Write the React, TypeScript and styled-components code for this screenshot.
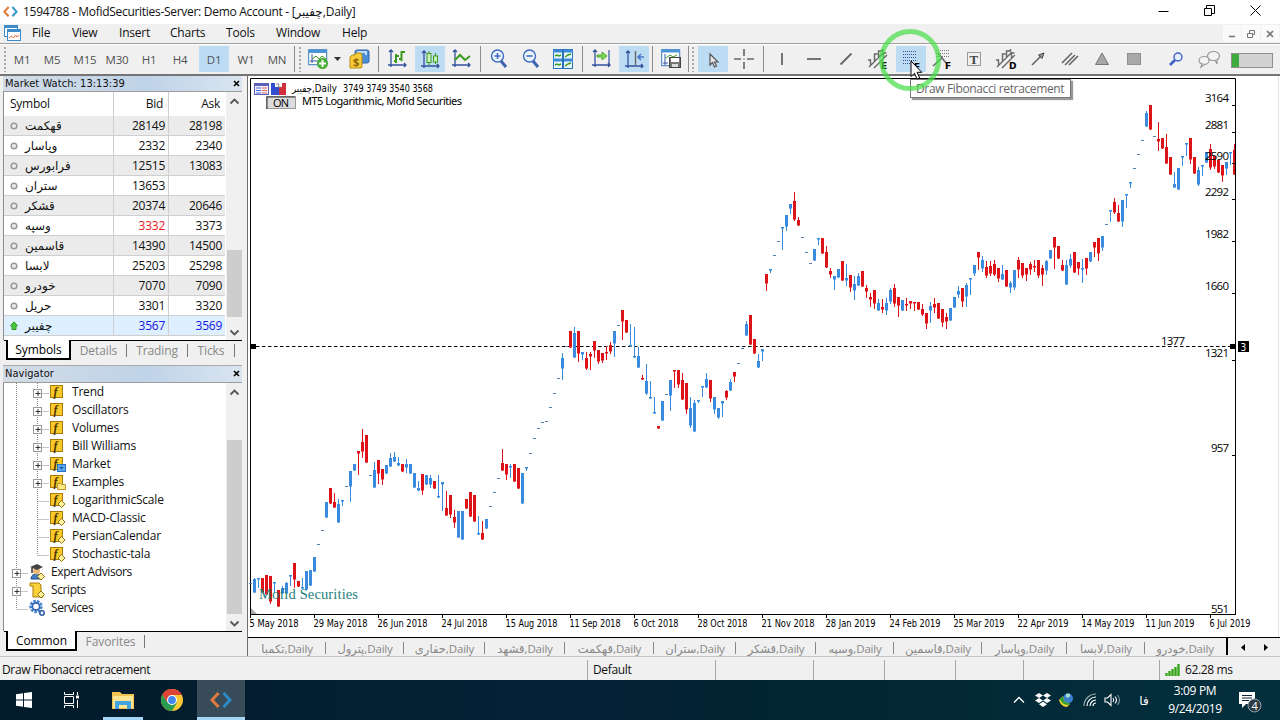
import { Fragment, ReactNode } from 'react';
import styled, { createGlobalStyle } from 'styled-components';

const GlobalStyle = createGlobalStyle`
	* {
		box-sizing: border-box;
	}
	body {
		margin: 0;
		overflow: hidden;
		background: #f0f0f0;
		font-family: 'Open Sans', 'Noto Sans', 'DejaVu Sans', sans-serif;
		font-size: 12px;
		color: #111;
	}
	svg {
		display: block;
		flex: none;
	}
`;

const Window = styled.div`
	position: relative;
	width: 1280px;
	height: 720px;
	display: flex;
	flex-direction: column;
	overflow: hidden;
	white-space: nowrap;
`;

/* ---------- title + menu ---------- */

const TitleBar = styled.div`
	height: 24px;
	display: flex;
	align-items: center;
	padding-left: 3px;
	background: #fff;

	.title {
		margin-left: 5px;
		padding-bottom: 2px;
		letter-spacing: -0.29px;
		flex: 1;
	}
	.buttons {
		display: flex;
		align-items: center;
		gap: 35px;
		padding: 0 19px 4px 0;
	}
`;

const MenuBar = styled.div`
	height: 20px;
	display: flex;
	align-items: center;
	padding-left: 4px;
	background: #f0f0f0;
	border-bottom: 1px solid #a0a0a0;
`;

const MenuItem = styled.span<{ $w: number }>`
	width: ${props => props.$w}px;
	padding-bottom: 2px;
	letter-spacing: -0.2px;
`;

const ChildButtons = styled.div`
	display: flex;
	margin-left: auto;
	gap: 1px;
	padding-right: 1px;

	span {
		width: 18px;
		height: 17px;
		display: flex;
		align-items: center;
		justify-content: center;
		background: #fafafa;
	}
`;

/* ---------- toolbar ---------- */

const ToolBar = styled.div`
	height: 32px;
	display: flex;
	align-items: center;
	padding: 0 0 1px 3px;
	background: #f0f0f0;
	border-top: 1px solid #fff;
	border-bottom: 2px solid #757575;
`;

const Grip = styled.i<{ $ml?: number }>`
	width: 4px;
	height: 26px;
	margin-left: ${props => props.$ml ?? 0}px;
	background: radial-gradient(circle at 2px 2px, #a9a9a9 1px, transparent 1.4px) 0
		0 / 5px 4px;
`;

const Sep = styled.i<{ $ml?: number }>`
	width: 1px;
	height: 26px;
	margin-left: ${props => props.$ml ?? 0}px;
	background: #8c8c8c;
`;

const Slot = styled.span<{ $w?: number; $ml?: number; $on?: boolean }>`
	width: ${props => props.$w ?? 32}px;
	height: 26px;
	margin-left: ${props => props.$ml ?? 0}px;
	display: flex;
	align-items: center;
	justify-content: center;
	border-left: ${props => (props.$on ? '2px solid #f0f0f0' : 'none')};
	background: ${props => (props.$on ? '#bcdcf4' : 'transparent')};
	padding-top: ${props => (props.$on ? 1 : 0)}px;
	color: #505050;
	font-size: 11.5px;
	letter-spacing: -0.2px;
`;

const Progress = styled.div`
	width: 42px;
	height: 15px;
	margin: 2px 0 0 6px;
	border: 1px solid #8f8f8f;
	background: linear-gradient(90deg, #3fab3f 7px, #d2d2d2 7px);
`;

/* ---------- side panels ---------- */

const Main = styled.div`
	height: 580px;
	display: flex;
`;

const Side = styled.div`
	width: 247px;
	display: flex;
	flex-direction: column;
	border-left: 3px solid #f0f0f0;
	border-right: 5px solid #f0f0f0;
`;

const PanelHead = styled.div`
	height: 16px;
	display: flex;
	align-items: center;
	justify-content: space-between;
	padding: 0 2px 1px 2px;
	background: linear-gradient(90deg, #d3dce6, #bfd3e8 60%, #d9e4f0);
	border-bottom: 1px solid #9c9c9c;
	font-family: 'DejaVu Sans Condensed', 'DejaVu Sans', sans-serif;
	font-stretch: condensed;
	font-size: 11px;
	letter-spacing: 0.05px;
`;

const PanelBody = styled.div<{ $h: number }>`
	height: ${props => props.$h}px;
	display: flex;
	background: #fff;
	border-left: 1px solid #8c8c8c;
`;

const Table = styled.div`
	width: 221px;
`;

const Row = styled.div<{ $bg: string; $head?: boolean }>`
	height: ${props => (props.$head ? 24 : 20)}px;
	display: grid;
	grid-template-columns: 110px 55px 56px;
	background: ${props => props.$bg};
	border-bottom: ${props => (props.$head ? 0 : 1)}px solid #cfcfcf;
	line-height: ${props => (props.$head ? 24 : 19)}px;
	letter-spacing: -0.25px;
`;

const Cell = styled.span<{ $right?: boolean; $color?: string }>`
	display: flex;
	align-items: center;
	justify-content: ${props => (props.$right ? 'flex-end' : 'flex-start')};
	padding: ${props => (props.$right ? '0 3px 0 0' : '0 0 0 6px')};
	border-right: 1px solid #cfcfcf;
	color: ${props => props.$color ?? '#111'};

	&:last-child {
		border-right: none;
	}
	.name {
		margin-left: 7px;
		letter-spacing: 0;
	}
`;

const Scroll = styled.div<{ $gap: number; $thumb: number }>`
	width: 16px;
	margin-left: auto;
	display: flex;
	flex-direction: column;
	align-items: center;
	background: #f0f0f0;
	padding: 5px 0 3px;

	i {
		width: 15px;
		height: ${props => props.$thumb}px;
		margin-top: ${props => props.$gap}px;
		background: #cdcdcd;
	}
	svg:last-child {
		margin-top: auto;
	}
`;

const Tabs = styled.div`
	height: 20px;
	display: flex;
	border-top: 1px solid #000;
	margin-left: 1px;
	padding-left: 2px;
	color: #888;
	letter-spacing: -0.1px;
	line-height: 19px;
`;

const Tab = styled.span<{ $w: number; $active?: boolean }>`
	width: ${props => props.$w}px;
	height: 20px;
	margin-top: -1px;
	display: flex;
	align-items: center;
	justify-content: center;
	color: ${props => (props.$active ? '#000' : '#888')};
	background: ${props => (props.$active ? '#fff' : 'transparent')};
	border: ${props => (props.$active ? '1px solid #000' : 'none')};
	border-width: ${props => (props.$active ? '0 2px 2px 2px' : '0')};
`;

const TabSep = styled.i`
	width: 1px;
	height: 13px;
	margin-top: 3px;
	background: #777;
`;

const Tree = styled.div`
	width: 221px;
`;

const TreeRow = styled.div<{ $root?: boolean }>`
	height: 18px;
	display: flex;
	align-items: center;
	letter-spacing: ${props => (props.$root ? -0.4 : -0.2)}px;

	span {
		margin-left: 5px;
		padding-bottom: 1px;
	}
`;

/* ---------- chart ---------- */

const ChartArea = styled.div`
	flex: 1;
	display: flex;
	flex-direction: column;
	border-left: 1px solid #6f6f6f;
	background: #fff;
`;

const ChartTabs = styled.div`
	height: 19px;
	display: flex;
	border-top: 1px solid #000;
	background: #f0f0f0;
	color: #888;

	.arrows {
		display: flex;
		align-items: center;
		gap: 19px;
		margin-left: 13px;
	}
`;

const ChartTab = styled.span<{ $w: number; $last?: boolean }>`
	width: ${props => props.$w}px;
	display: flex;
	align-items: center;
	justify-content: center;
	padding: 2px ${props => (props.$last ? 3 : 0)}px 0 0;
	font-size: 11.5px;
	letter-spacing: -0.2px;
	background: ${props =>
		props.$last
			? 'linear-gradient(#000, #000) right 0 / 2px 17px no-repeat'
			: 'linear-gradient(#888, #888) right 4px / 1px 12px no-repeat'};
`;

/* ---------- status + taskbar ---------- */

const StatusBar = styled.div`
	height: 24px;
	display: flex;
	align-items: flex-end;
	background: #f0f0f0;
	border-top: 1px solid #c4c4c4;
	letter-spacing: -0.36px;
`;

const StatusCell = styled.span<{ $w: number; $first?: boolean }>`
	width: ${props => props.$w}px;
	height: 20px;
	display: flex;
	align-items: center;
	gap: 5px;
	padding-left: ${props => (props.$first ? 2 : 5)}px;
	padding-bottom: 1px;
	border-left: ${props => (props.$first ? 0 : 1)}px solid #a8a8a8;
`;

const TaskBar = styled.div`
	height: 40px;
	display: flex;
	align-items: center;
	background: linear-gradient(90deg, #021c2c, #062036 45%, #022532 60%, #042f3d);
	color: #fff;
`;

const Task = styled.span<{ $w: number; $active?: boolean; $open?: boolean }>`
	width: ${props => props.$w}px;
	height: 40px;
	display: flex;
	align-items: center;
	justify-content: center;
	background: ${props => (props.$active ? '#384b59' : 'transparent')};
	box-shadow: ${props =>
		props.$active || props.$open ? 'inset 0 -3px 0 #a5d5f5' : 'none'};
`;

const Tray = styled.div`
	display: flex;
	align-items: center;
	margin-left: auto;
	height: 40px;

	.lang {
		width: 26px;
		margin-left: 9px;
		text-align: center;
	}
	.clock {
		width: 76px;
		text-align: center;
		line-height: 18px;
		letter-spacing: -0.35px;
	}
	.notice {
		width: 47px;
		padding: 4px 0 0 6px;
	}
`;

/* ---------- overlays ---------- */

const Tooltip = styled.div`
	position: absolute;
	left: 910px;
	top: 79px;
	width: 161px;
	height: 19px;
	display: flex;
	align-items: center;
	padding: 0 0 1px 5px;
	border: 1px solid #777;
	background: #fff;
	color: #666;
	letter-spacing: -0.36px;
	box-shadow: 2px 2px 1px #999;
`;

const Pointer = styled.svg`
	position: absolute;
	left: 878px;
	top: 28px;
`;

/* ---------- icons ---------- */

const NAVY = '#34529c';
const GREEN = '#3c9a1e';
const GREY = '#666';

const axes = (
	<path
		d="M4 1v17M1 16h18M2 3l2-2 2 2M17 14l2 2-2 2"
		stroke={NAVY}
		strokeWidth="1.3"
		fill="none"
	/>
);

const channel = (
	<path
		d="M1 18L16 3M6 19L19 6M2.500 16v-5H0M6.500 12V5h3M10.500 9V2h4V0M15.500 10V4h3"
		stroke={GREY}
		strokeWidth="1.4"
		fill="none"
	/>
);

const dots = (x: number, y: number, w: number, rows: number, color: string) =>
	Array.from({ length: rows }, (_, i) => (
		<path
			key={i}
			d={`M${x} ${y + i * 3}h${w}`}
			stroke={color}
			strokeWidth="1"
			strokeDasharray="1 1"
		/>
	));

const letter = (ch: string) => (
	<text
		x="13"
		y="19.500"
		fontSize="9"
		fontWeight="900"
		fontFamily="DejaVu Sans, sans-serif"
		fill="#000"
	>
		{ch}
	</text>
);

const icons: Record<string, ReactNode> = {
	newChart: (
		<>
			<rect x="0.7" y="0.7" width="18" height="15" fill="#fff" stroke="#3a7cc0" />
			<path d="M1 2.5h18" stroke="#4a94d8" strokeWidth="3" />
			<path d="M4 5v9M2 12h14" stroke={NAVY} />
			<path d="M4 10l4-3 3 3 3-3 4 3" stroke={GREEN} fill="none" />
			<circle cx="14.5" cy="14.5" r="5.5" fill="#46ad35" />
			<path d="M11 14.5h7M14.5 11v7" stroke="#fff" strokeWidth="2" />
		</>
	),
	profiles: (
		<>
			<rect x="6" y="1" width="14" height="13" rx="2" fill="#4a8fd6" stroke="#2f62aa" />
			<path d="M8 3h9v3" stroke="#bcdcf8" strokeWidth="2" fill="none" />
			<path
				d="M1 8l2-2h3l1-2h5l1 2v12l-1 1H1z"
				fill="#f6cc3a"
				stroke="#b88a12"
			/>
			<text x="4" y="17" fontSize="11" fontWeight="700" fill="#8a6205">
				$
			</text>
		</>
	),
	bars: (
		<>
			{axes}
			<path
				d="M9 5v9M7 12h2M9 7h3M14.500 2v10M12 10h2M14 3h4"
				stroke={GREEN}
				strokeWidth="2"
				fill="none"
			/>
		</>
	),
	candles: (
		<>
			{axes}
			<path d="M9 1v14M15.500 3v11" stroke={GREEN} />
			<rect x="7" y="3.5" width="4" height="9" fill="#c9f0b8" stroke={GREEN} />
			<rect x="13.500" y="6" width="4" height="6" fill="#c9f0b8" stroke={GREEN} />
		</>
	),
	line: (
		<>
			{axes}
			<path d="M4 11l5-5 5 5 5-4" stroke={GREEN} strokeWidth="2" fill="none" />
		</>
	),
	zoomIn: (
		<>
			<path d="M12 12l5 6" stroke="#3d63b0" strokeWidth="3" />
			<circle cx="8.500" cy="7" r="6" fill="#eaf4ff" stroke="#3f6cc4" strokeWidth="1.4" />
			<path d="M5.500 7h6M8.500 4v6" stroke="#3f6cc4" strokeWidth="1.6" />
		</>
	),
	zoomOut: (
		<>
			<path d="M12 12l5 6" stroke="#3d63b0" strokeWidth="3" />
			<circle cx="8.500" cy="7" r="6" fill="#eaf4ff" stroke="#3f6cc4" strokeWidth="1.4" />
			<path d="M5.500 7h6" stroke="#3f6cc4" strokeWidth="1.6" />
		</>
	),
	tile: (
		<>
			<rect x="0.500" y="0.500" width="19" height="19" fill="#e8f6ff" stroke="#2b72b8" />
			<path d="M0 2h20M0 11h20" stroke="#3b8ad8" strokeWidth="3" />
			<path d="M10 0v20" stroke="#2b72b8" strokeWidth="2" />
			<path
				d="M2 7l2-1 2 1 2-1M12 8l3-2 3-1M2 16l2-1 2 1 2-1M12 17l3-2 3-1"
				stroke={GREEN}
				strokeWidth="1.4"
				fill="none"
			/>
		</>
	),
	autoScroll: (
		<>
			{axes}
			<path d="M18 1v14" stroke={NAVY} strokeWidth="1.2" />
			<path d="M6 6h5V3l5 4-5 4V8H6z" fill="#7ed957" stroke={GREEN} strokeWidth="0.800" />
		</>
	),
	shift: (
		<>
			{axes}
			<path d="M11.500 1v14" stroke={GREY} strokeWidth="1.4" />
			<path d="M20 7h-5M17 4l-3 3 3 3" stroke="#4a78cc" strokeWidth="1.600" fill="none" />
		</>
	),
	template: (
		<>
			<rect x="0.700" y="0.700" width="18" height="16" fill="#fff" stroke="#3a7cc0" />
			<path d="M1 2h18" stroke="#4a94d8" strokeWidth="3" />
			<path d="M4 5v11M2 14h5" stroke={NAVY} />
			<path d="M5 9l4-3 3 2 4-2" stroke={GREEN} fill="none" />
			<rect x="8.500" y="8.500" width="11" height="10" fill="#777" stroke="#444" />
			<rect x="10" y="9" width="8" height="4" fill="#fff" />
			<rect x="11" y="15" width="6" height="3" fill="#ddd" />
		</>
	),
	cursor: (
		<path
			d="M7 4v11l2.500-2.500 2 4.500 2-1-2-4H15z"
			fill="#e8e8e8"
			stroke="#555"
			strokeWidth="1.2"
		/>
	),
	cross: (
		<path
			d="M10 0v7M10 13v7M0 10h7M13 10h7M9.500 10h1"
			stroke={GREY}
			strokeWidth="1.6"
		/>
	),
	vline: <path d="M10 4v12" stroke={GREY} strokeWidth="1.8" />,
	hline: <path d="M3 10h14" stroke={GREY} strokeWidth="1.8" />,
	trend: <path d="M4.500 15.500l11-11" stroke={GREY} strokeWidth="1.8" />,
	channelE: (
		<>
			{channel}
			{letter('E')}
		</>
	),
	fib: (
		<>
			{dots(2, 1.5, 14, 5, '#3a4f94')}
			{letter('F')}
		</>
	),
	fibE: (
		<>
			{dots(4, 1.5, 13, 3, '#777')}
			<path d="M1 17l9-8M6 4l8 10" stroke={GREY} strokeWidth="1.5" />
			{letter('F')}
		</>
	),
	text: (
		<>
			<rect
				x="3.500"
				y="3.500"
				width="13"
				height="13"
				fill="none"
				stroke="#444"
				strokeDasharray="1 1"
			/>
			<text
				x="5.500"
				y="14.500"
				fontSize="13"
				fontWeight="700"
				fontFamily="Liberation Serif, serif"
				fill="#444"
			>
				T
			</text>
		</>
	),
	andrews: (
		<>
			{channel}
			{letter('D')}
		</>
	),
	arrow: (
		<>
			<path d="M4 16l9-9" stroke={GREY} strokeWidth="1.600" />
			<path d="M10.500 6l5.500-2-2 5.500z" fill="#999" stroke="#444" />
		</>
	),
	lines: (
		<path
			d="M2 14L12 4M5 16L15 6M9 16l9-9"
			stroke={GREY}
			strokeWidth="1.6"
			fill="none"
		/>
	),
	triangle: <path d="M10 4l6.500 11.500h-13z" fill="#a6a6a6" stroke="#777" />,
	rect: <rect x="3.500" y="4.500" width="13" height="11" fill="#a8a8a8" stroke="#909090" />,
	search: (
		<>
			<path d="M9 11l-5 5" stroke="#4161c4" strokeWidth="2.600" />
			<circle cx="12" cy="8" r="4" fill="#e4ecff" stroke="#4161c4" strokeWidth="1.4" />
		</>
	),
	chat: (
		<g fill="#f3f3f3" stroke="#999" strokeWidth="1.2">
			<ellipse cx="14.500" cy="7" rx="6" ry="4.500" />
			<path d="M16 11l2 4v-5" />
			<ellipse cx="5" cy="11.500" rx="5" ry="4" />
			<path d="M3 15l-1 3 4-3" />
		</g>
	),
};

const Icon = ({ name }: { name: string }) => (
	<svg width="20" height="20" viewBox="0 0 20 20" overflow="visible">
		{icons[name]}
	</svg>
);

const Chevron = ({ up }: { up?: boolean }) => (
	<svg width="11" height="9" viewBox="0 0 11 9">
		<path
			d={up ? 'M1.500 6.500l4-4 4 4' : 'M1.500 2.500l4 4 4-4'}
			fill="none"
			stroke="#555"
			strokeWidth="1.8"
		/>
	</svg>
);

const CloseMark = () => (
	<svg width="7" height="7" viewBox="0 0 7 7">
		<path d="M1 1l5 5M6 1L1 6" stroke="#000" strokeWidth="1.6" />
	</svg>
);

const BracketLogo = ({ size }: { size: number }) => (
	<svg width={size} height={size * 0.75} viewBox="0 0 16 12">
		<path d="M6 1L1.500 6 6 11" fill="none" stroke="#e07a3c" strokeWidth="2.2" />
		<path d="M10 1l4.500 5-4.500 5" fill="none" stroke="#3c9ad0" strokeWidth="2.2" />
	</svg>
);

const FnBadge = ({ badge }: { badge?: string }) => (
	<svg width="17" height="18" viewBox="0 0 17 18">
		<rect x="0.500" y="2.500" width="12" height="12" fill="#f8c92c" stroke="#a87a08" />
		<text
			x="3.500"
			y="12.500"
			fontSize="12"
			fontStyle="italic"
			fontWeight="700"
			fontFamily="Liberation Serif, serif"
			fill="#4a3600"
		>
			f
		</text>
		{badge === 'market' && (
			<>
				<rect x="7.500" y="9.500" width="8" height="7" fill="#5aa6f0" stroke="#2d6fc0" />
				<path d="M9.500 12l2 2.500 2-2.500z" fill="#134a90" />
			</>
		)}
		{badge === 'folder' && (
			<path d="M7.500 10.500h3l1 1h4v5h-8z" fill="#fbe680" stroke="#b8962c" />
		)}
		{badge === 'diamond' && (
			<path d="M11.500 9.500l3.500 3.500-3.500 3.500-3.500-3.500z" fill="#fdf2a0" stroke="#9a7408" />
		)}
	</svg>
);

const RootIcon = ({ kind }: { kind: string }) => (
	<svg width="17" height="18" viewBox="0 0 17 18">
		{kind === 'advisor' && (
			<>
				<path d="M2 16c0-4 3-5 5-5s5 1 5 5z" fill="#3f7cc4" stroke="#1f4c8a" />
				<circle cx="7.500" cy="8" r="3.500" fill="#e8b878" />
				<path d="M1 4l7-3 6 3-6 3z" fill="#444" />
				<path d="M3 5v5" stroke="#333" strokeWidth="1.5" />
			</>
		)}
		{kind === 'script' && (
			<path
				d="M1 2h9l2 2v8h2v4H4V5H1z"
				fill="#f9d23c"
				stroke="#a87a08"
			/>
		)}
		{kind === 'service' ? (
			<>
				<circle
					cx="7"
					cy="7.500"
					r="5"
					fill="none"
					stroke="#4a84cc"
					strokeWidth="3.4"
					strokeDasharray="2.4 1"
				/>
				<circle cx="7" cy="7.500" r="3.600" fill="#fff" stroke="#2f62b0" strokeWidth="1.600" />
				<circle cx="13" cy="14" r="2.200" fill="#fff" stroke="#2f62b0" strokeWidth="1.600" />
			</>
		) : (
			<path d="M12 10l3.500 3.500L12 17l-3.500-3.500z" fill="#fdf2a0" stroke="#9a7408" />
		)}
	</svg>
);

/* ---------- data ---------- */

const menus: [string, number][] = [
	['File', 40],
	['View', 47],
	['Insert', 51],
	['Charts', 56],
	['Tools', 50],
	['Window', 66],
	['Help', 40],
];

const timeframes: [string, number, number][] = [
	['M1', 30, 0],
	['M5', 30, 0],
	['M15', 30, 3],
	['M30', 30, 2],
	['H1', 30, 2],
	['H4', 30, 1],
	['D1', 32, 2],
	['W1', 30, 2],
	['MN', 30, 1],
];

const quotes: [string, string, string][] = [
	['قهکمت', '28149', '28198'],
	['وپاسار', '2332', '2340'],
	['فرابورس', '12515', '13083'],
	['ستران', '13653', ''],
	['قشکر', '20374', '20646'],
	['وسپه', '3332', '3373'],
	['قاسمین', '14390', '14500'],
	['لابسا', '25203', '25298'],
	['خودرو', '7070', '7090'],
	['حریل', '3301', '3320'],
	['چفیبر', '3567', '3569'],
];

const indicators: [string, string?][] = [
	['Trend'],
	['Oscillators'],
	['Volumes'],
	['Bill Williams'],
	['Market', 'market'],
	['Examples', 'folder'],
	['LogarithmicScale', 'diamond'],
	['MACD-Classic', 'diamond'],
	['PersianCalendar', 'diamond'],
	['Stochastic-tala', 'diamond'],
];

const roots: [string, string][] = [
	['Expert Advisors', 'advisor'],
	['Scripts', 'script'],
	['Services', 'service'],
];

const chartTabs: [string, number][] = [
	['تکمبا', 78],
	['پترول', 78],
	['حفاری', 81],
	['قشهد', 80],
	['قهکمت', 89],
	['ستران', 82],
	['قشکر', 80],
	['وسپه', 78],
	['قاسمین', 88],
	['وپاسار', 85],
	['لابسا', 78],
	['خودرو', 83],
];

const statusWidths = [98, 71, 71, 68, 70, 66];

// scale labels: text, text centre, tick position
const prices: [string, number, number][] = [
	['3164', 98, 105],
	['2881', 125, 132],
	['2590', 156, 163],
	['2292', 192, 199],
	['1982', 234, 241],
	['1660', 286, 293],
	['1321', 353, 360],
	['957', 448, 455],
	['551', 609, 614],
];

const dates: [string, number][] = [
	['5 May 2018', 49],
	['29 May 2018', 54],
	['26 Jun 2018', 50],
	['24 Jul 2018', 46],
	['15 Aug 2018', 52],
	['11 Sep 2018', 51],
	['6 Oct 2018', 45],
	['28 Oct 2018', 50],
	['21 Nov 2018', 53],
	['28 Jan 2019', 50],
	['24 Feb 2019', 51],
	['25 Mar 2019', 51],
	['22 Apr 2019', 51],
	['14 May 2019', 53],
	['11 Jun 2019', 49],
	['6 Jul 2019', 41],
];

// one bar per token: colour, body top, body bottom, [high, low]; "d" is a flat bar
const bars = `
d583 b579,592,578,592 b578,579,578,587 r578,592 r575,594 r576,601,576,603 b582,583,582,592 r590,606
b588,593,586,593 b583,593,582,593 b575,576,575,585 r563,579,563,587 r581,586 b587,588,578,588 b571,589 b570,585
b557,571 d544 d530 b502,517 r488,503 r502,507,493,507 b504,522,499,522 b500,501,500,505
d486 b471,486,471,501 b464,470 r451,453,451,474 r442,451,429,457 r435,462 d475 b470,487,462,487
r460,473,460,483 r469,479,469,484 b465,473 b458,466,453,466 b457,461,452,461 b463,465,457,465 r464,471 b464,467,459,472
b464,473 b473,487 b488,490,481,490 r474,490,474,494 b475,484 b478,484,475,487 r481,488 b496,497,475,497
b482,484,482,510 r508,515,491,515 r495,514,495,517 r517,522,510,527 b511,537 b511,539 r499,508 r492,516
r495,521 b533,534,516,534 r533,539,521,539 b519,528 d506 d492 d478 r463,470,449,470
r464,474,464,479 b466,467,464,477 r464,481 r468,488 b473,503 b467,468,467,470 d453 d438
d428 d422 d421 d407 d393 d378 b358,368,353,379 d346
r331,347 b333,357,327,357 r331,353,331,361 b352,354,352,359 r358,368,352,369 r354,356,352,369 r341,350,341,357 r350,361,350,363
r353,360,353,362 r352,353,346,359 r345,351,342,353 b331,343,331,356 d325 r310,321,310,339 r320,332 b345,346,324,346
b356,357,327,357 b356,367,347,367 r378,379,375,379 b381,393,364,394 b397,398,381,398 b412,413,397,413 r426,428 b401,420
d394 b380,395,380,410 r370,371,370,387 r370,384,370,387 r380,399,373,399 r383,409,383,413 b408,425,397,427 b403,431,400,431
b400,401,400,402 b386,387,386,396 b379,387,373,387 r380,398,380,401 b397,409,397,413 b408,417,408,418 b401,403,401,416 r391,397,390,399
b382,390,379,390 r372,376,372,381 d363 d348 b324,335,321,335 r315,344 r339,353 b361,367,354,367
b349,351,349,360 r274,283,274,290 b269,270,269,272 d255 d241 b227,228,227,249 b215,226,215,230 b204,208,204,213
r201,219,192,220 r220,225,217,225 d237 d252 d263 b249,260 b238,239,238,244 r238,253
r252,267,246,267 r271,274,268,277 b276,279,276,289 b269,277 r261,280 b278,280,264,285 r275,287,275,291 b284,290,276,299
b276,285,273,285 r271,286 r288,291,285,297 r297,299,293,306 r290,303,290,308 b303,310,299,310 r307,309,299,312 b303,310,298,314
b290,301,288,303 r288,303,284,306 r297,305,297,316 b300,310 r304,305,298,310 r301,303,301,308 r302,303,302,310 r302,309
r309,314,304,315 r313,323,313,328 b306,310,302,322 r304,307,298,312 r303,318 r309,322,309,326 r317,321,313,328 b308,320
b297,307 b291,294,286,297 r288,301,288,306 b285,296,283,306 b278,279,278,294 b265,273,265,275 r252,257,252,269 b260,268,256,271
r267,275,261,277 r266,273,261,275 r264,274,260,275 r268,278,268,281 b274,279,265,279 r270,286 b283,287,281,292 b270,287,270,289
r260,269,257,277 r263,275,263,277 r268,274,268,280 r264,269,262,274 r266,267,260,271 r260,275,260,277 r268,274,265,285 b261,270,260,274
b250,258 r237,247,237,268 r246,258 r265,270,260,270 b265,284,260,284 b259,265,254,267 r252,272 r262,268,262,274
b268,269,259,282 r258,268,258,274 b252,261 r242,247,242,256 r238,253,238,260 b236,247,236,250 d224 b210,211,210,221
r202,212,198,213 r213,221,205,221 b200,221,200,226 b194,195,194,207 b182,183,182,187 d168 d154 d140
b113,126,111,126 r105,129 d136 r139,141,122,150 r138,148 r147,163,134,163 r157,174 b184,187,172,187
b168,189 b156,157,156,165 b143,144,143,155 r138,159,138,163 r157,173 b170,184,167,185 b165,166,165,175 b152,162
r149,167,144,169 r156,166,156,168 r160,172 r165,175,165,181 b162,168,162,174 b152,153,152,164 r150,174,144,174
`
	.trim()
	.split(/\s+/)
	.map(token => {
		const n = token.slice(1).split(',').map(Number);
		return {
			color: token[0] === 'r' ? '#dc141a' : '#3a8ade',
			flat: token[0] === 'd',
			top: n[0],
			bottom: n[1] ?? n[0],
			high: n[2] ?? n[0],
			low: n[3] ?? n[1] ?? n[0],
		};
	});

const SANS = 'Open Sans, Noto Sans, DejaVu Sans, sans-serif';
const TAHOMA = 'DejaVu Sans Condensed, DejaVu Sans, sans-serif';

const Chart = () => (
	<svg width="1032" height="561" viewBox="248 76 1032 561" fontFamily={TAHOMA}>
		<path d="M250.500 614V78.500h985v536M250 614.500h986" fill="none" stroke="#000" />
		<path d="M1278.500 76v561" stroke="#e3e3e3" />
		<path d="M251 608l6 6h-6z" fill="#aaa" />
		<path d="M250 346.500h985" stroke="#000" strokeDasharray="3.500 2.500" />

		{bars.map((b, i) => {
			const x = 250 + i * 4;
			const w = x > 1232 ? 2 : 3;
			return b.flat ? (
				<rect key={i} x={x - 1} y={b.top} width="3" height="1" fill="#5a7fae" />
			) : (
				<Fragment key={i}>
					<rect x={x} y={b.high} width="1" height={b.low - b.high + 1} fill={b.color} />
					<rect
						x={x - 1}
						y={b.top}
						width={w}
						height={b.bottom - b.top + 0.5}
						fill={b.color}
					/>
				</Fragment>
			);
		})}

		<rect x="251" y="344" width="5" height="5" />
		<rect x="1230" y="344" width="5" height="5" />
		<rect x="1238" y="341" width="11" height="11" />
		<text x="1240.500" y="350.500" fontSize="10" fill="#fff">
			3
		</text>
		<text x="1161" y="345" fontSize="11.500" fontFamily={SANS} textLength="24">
			1377
		</text>

		{prices.map(([label, y, tick]) => (
			<Fragment key={label}>
				<path d={`M1232 ${tick + 0.5}h4`} stroke="#000" />
				<text
					x={1229 - label.length * 6}
					y={y + 4}
					fontSize="11.500"
					fontFamily={SANS}
					textLength={label.length * 6}
				>
					{label}
				</text>
			</Fragment>
		))}
		{dates.map(([label, w], i) => (
			<Fragment key={label}>
				<path d={`M${250.5 + i * 64} 614v4`} stroke="#000" />
				<text
					x={249.5 + i * 64}
					y="627"
					fontSize="10"
					textLength={w}
					lengthAdjust="spacingAndGlyphs"
				>
					{label}
				</text>
			</Fragment>
		))}

		<rect x="254.500" y="83.500" width="14" height="11" fill="#eef" stroke="#5a62b8" />
		<path d="M255 85h13" stroke="#5a62b8" strokeWidth="2" />
		<path d="M256 88h5M256 90.500h5M256 93h5" stroke="#4a6ad8" />
		<path d="M262 88h5M262 90.500h5M262 93h5" stroke="#e06a4a" />
		<path d="M271 83h4v4h4v8h-8z" fill="#2f4fd0" />
		<path d="M279 87h3v-4h4v12h-7z" fill="#d0303c" />
		<path d="M276 84h3l-1 3h3" stroke="#888" fill="none" />
		<text x="292" y="92" fontSize="10" textLength="45" lengthAdjust="spacingAndGlyphs">
			چفیبر,Daily
		</text>
		<text x="343" y="92" fontSize="10" textLength="90" lengthAdjust="spacingAndGlyphs">
			3749 3749 3540 3568
		</text>
		<rect x="266.500" y="96.500" width="29" height="12" fill="#dcdcdc" stroke="#999" />
		<path d="M267 109V97h28" stroke="#333" fill="none" />
		<text x="273" y="107" fontSize="11" fontFamily={SANS} textLength="16">
			ON
		</text>
		<text x="302" y="105" fontSize="11" fontFamily="Noto Sans, sans-serif" textLength="160">
			MT5 Logarithmic, Mofid Securities
		</text>
		<text
			x="259"
			y="599"
			fontSize="14.500"
			fontFamily="Liberation Serif, serif"
			fill="#1d8080"
			textLength="99"
		>
			Mofid Securities
		</text>
	</svg>
);

const Expander = ({ root, plus, last }: { root?: boolean; plus?: boolean; last?: boolean }) => {
	const x = root ? 12.5 : 33.5;
	return (
		<svg width={root ? 25 : 46} height="18" viewBox={`0 0 ${root ? 25 : 46} 18`}>
			<g stroke="#888" strokeDasharray="1 1" fill="none">
				{!root && <path d="M12.500 0v18" />}
				<path d={`M${x} 0v${last ? 10 : 18}M${x} 10.500h12`} />
			</g>
			{plus && (
				<>
					<rect x={x - 4} y="6.500" width="8" height="8" fill="#fff" stroke="#999" />
					<path d={`M${x - 2} 10.500h5M${x + 0.5} 8v5`} stroke="#333" />
				</>
			)}
		</svg>
	);
};

const MarketWatch = () => (
	<>
		<PanelHead>
			Market Watch: 13:13:39
			<CloseMark />
		</PanelHead>
		<PanelBody $h={248}>
			<Table>
				<Row $bg="#fff" $head>
					<Cell>Symbol</Cell>
					<Cell $right style={{ paddingRight: 5 }}>
						Bid
					</Cell>
					<Cell $right style={{ paddingRight: 5 }}>
						Ask
					</Cell>
				</Row>
				{quotes.map(([name, bid, ask], i) => {
					const last = i === quotes.length - 1;
					const color = last ? '#1414e0' : undefined;
					return (
						<Row key={name} $bg={last ? '#deefff' : i % 2 ? '#fff' : '#ebebeb'}>
							<Cell>
								<svg width="8" height="10" viewBox="0 0 8 10">
									{last ? (
										<path
											d="M4 0.800l3.500 4H6v3.700H2V4.800H0.500z"
											fill="#4cc840"
											stroke="#2c9a24"
										/>
									) : (
										<circle cx="4" cy="5" r="2.800" fill="#eee" stroke="#999" strokeWidth="1.500" />
									)}
								</svg>
								<span className="name">{name}</span>
							</Cell>
							<Cell $right $color={bid === '3332' ? '#e81818' : color}>
								{bid}
							</Cell>
							<Cell $right $color={color}>
								{ask}
							</Cell>
						</Row>
					);
				})}
			</Table>
			<Scroll $gap={144} $thumb={67}>
				<Chevron up />
				<i />
				<Chevron />
			</Scroll>
		</PanelBody>
		<Tabs>
			<Tab $w={65} $active>
				Symbols
			</Tab>
			<Tab $w={55}>Details</Tab>
			<TabSep />
			<Tab $w={60}>Trading</Tab>
			<TabSep />
			<Tab $w={46}>Ticks</Tab>
			<TabSep />
		</Tabs>
	</>
);

const Navigator = () => (
	<>
		<PanelHead style={{ marginTop: 5, height: 18, borderTop: '1px solid #aaa' }}>
			Navigator
			<CloseMark />
		</PanelHead>
		<PanelBody $h={248}>
			<Tree>
				{indicators.map(([name, badge], i) => (
					<TreeRow key={name}>
						<Expander plus={i < 6} last={i === 9} />
						<FnBadge badge={badge} />
						<span>{name}</span>
					</TreeRow>
				))}
				{roots.map(([name, kind], i) => (
					<TreeRow key={name} $root>
						<Expander root plus={i < 2} last={i === 2} />
						<RootIcon kind={kind} />
						<span>{name}</span>
					</TreeRow>
				))}
			</Tree>
			<Scroll $gap={43} $thumb={174}>
				<Chevron up />
				<i />
				<Chevron />
			</Scroll>
		</PanelBody>
		<Tabs>
			<Tab $w={71} $active>
				Common
			</Tab>
			<Tab $w={67}>Favorites</Tab>
			<TabSep />
		</Tabs>
	</>
);

const drawTools = [
	'hline',
	'trend',
	'channelE',
	'fib',
	'fibE',
	'text',
	'andrews',
	'arrow',
	'lines',
	'triangle',
	'rect',
];

export default function App(): JSX.Element {
	return (
		<Window>
			<GlobalStyle />
			<TitleBar>
				<BracketLogo size={15} />
				<span className="title">
					1594788 - MofidSecurities-Server: Demo Account - [چفیبر,Daily]
				</span>
				<div className="buttons">
					<svg width="11" height="11" viewBox="0 0 11 11">
						<path d="M0.500 6.500h10" stroke="#000" />
					</svg>
					<svg width="11" height="11" viewBox="0 0 11 11">
						<path d="M0.500 3.500h7v7h-7zM2.500 3V0.500h8v8H8" fill="none" stroke="#000" />
					</svg>
					<svg width="11" height="11" viewBox="0 0 11 11">
						<path d="M0.500 0.500l10 10M10.500 0.500l-10 10" stroke="#000" />
					</svg>
				</div>
			</TitleBar>

			<MenuBar>
				<svg width="28" height="17" viewBox="0 0 28 17">
					<rect x="0.500" y="0.500" width="13" height="11" fill="#fff" stroke="#3c8ccc" />
					<path d="M1 2h13" stroke="#3c8ccc" strokeWidth="2" />
					<rect x="3.500" y="4.500" width="13" height="11" fill="#fff" stroke="#3c8ccc" />
					<path d="M4 6h13" stroke="#3c8ccc" strokeWidth="2" />
					<path d="M5 13l2.500-2 2 2 2-3 1.500 2 2.500-2" stroke="#e0683c" fill="none" />
				</svg>
				{menus.map(([label, w]) => (
					<MenuItem key={label} $w={w}>
						{label}
					</MenuItem>
				))}
				<ChildButtons>
					<span>
						<svg width="8" height="8" viewBox="0 0 8 8">
							<path d="M1 6.500h6" stroke="#777" strokeWidth="1.600" />
						</svg>
					</span>
					<span>
						<svg width="8" height="8" viewBox="0 0 8 8">
							<path d="M0.500 3.500h5v4h-5zM2.500 3V0.500h5v4H6" fill="none" stroke="#777" />
						</svg>
					</span>
					<span>
						<svg width="8" height="8" viewBox="0 0 8 8">
							<path d="M1 1l6 6M7 1L1 7" stroke="#777" strokeWidth="1.700" />
						</svg>
					</span>
				</ChildButtons>
			</MenuBar>

			<ToolBar>
				<Grip />
				{timeframes.map(([label, w, ml]) => (
					<Slot key={label} $w={w} $ml={ml} $on={label === 'D1'}>
						{label}
					</Slot>
				))}
				<Sep $ml={2} />
				<Grip $ml={3} />
				<Slot>
					<Icon name="newChart" />
				</Slot>
				<svg width="7" height="4" viewBox="0 0 7 4">
					<path d="M0 0h7L3.500 4z" fill="#333" />
				</svg>
				<Slot $ml={2}>
					<Icon name="profiles" />
				</Slot>
				<Sep $ml={3} />
				<Slot $ml={2}>
					<Icon name="bars" />
				</Slot>
				<Slot $on>
					<Icon name="candles" />
				</Slot>
				<Slot>
					<Icon name="line" />
				</Slot>
				<Sep $ml={3} />
				<Slot $ml={2}>
					<Icon name="zoomIn" />
				</Slot>
				<Slot>
					<Icon name="zoomOut" />
				</Slot>
				<Slot>
					<Icon name="tile" />
				</Slot>
				<Sep $ml={3} />
				<Slot $ml={2}>
					<Icon name="autoScroll" />
				</Slot>
				<Slot $on>
					<Icon name="shift" />
				</Slot>
				<Sep $ml={3} />
				<Slot $ml={2}>
					<Icon name="template" />
				</Slot>
				<Sep $ml={1} />
				<Grip $ml={2} />
				<Slot $on $ml={1}>
					<Icon name="cursor" />
				</Slot>
				<Slot>
					<Icon name="cross" />
				</Slot>
				<Sep $ml={3} />
				<Slot $ml={2}>
					<Icon name="vline" />
				</Slot>
				{drawTools.map(name => (
					<Slot key={name} $on={name === 'fib'}>
						<Icon name={name} />
					</Slot>
				))}
				<Slot $ml={10}>
					<Icon name="search" />
				</Slot>
				<Slot $ml={1}>
					<Icon name="chat" />
				</Slot>
				<Progress />
			</ToolBar>

			<Main>
				<Side>
					<MarketWatch />
					<Navigator />
				</Side>
				<ChartArea>
					<Chart />
					<ChartTabs>
						{chartTabs.map(([name, w], i) => (
							<ChartTab key={name} $w={w} $last={i === chartTabs.length - 1}>
								{name},Daily
							</ChartTab>
						))}
						<div className="arrows">
							<svg width="4" height="7" viewBox="0 0 4 7">
								<path d="M4 0v7L0 3.500z" />
							</svg>
							<svg width="4" height="7" viewBox="0 0 4 7">
								<path d="M0 0v7l4-3.500z" />
							</svg>
						</div>
					</ChartTabs>
				</ChartArea>
			</Main>

			<StatusBar>
				<StatusCell $w={587} $first>
					Draw Fibonacci retracement
				</StatusCell>
				<StatusCell $w={128}>Default</StatusCell>
				{statusWidths.map((w, i) => (
					<StatusCell key={i} $w={w} />
				))}
				<StatusCell $w={121}>
					<svg width="15" height="12" viewBox="0 0 15 12">
						<path
							d="M1.500 12V9M4.500 12V7M7.500 12V5M10.500 12V3M13.500 12V0"
							stroke="#35a51c"
							strokeWidth="2.400"
						/>
					</svg>
					62.28 ms
				</StatusCell>
			</StatusBar>

			<TaskBar>
				<Task $w={48}>
					<svg width="16" height="16" viewBox="0 0 16 16" fill="#fff">
						<path d="M0 2.200L7 1.200v6.300H0zM8 1l8-1v7.500H8zM0 8.500h7v6.300l-7-1zM8 8.500h8V16l-8-1z" />
					</svg>
				</Task>
				<Task $w={47}>
					<svg width="16" height="16" viewBox="0 0 16 16" fill="none" stroke="#fff">
						<path d="M0.500 0v2.500h9V0M0.500 4.500h9v7h-9zM0.500 16v-2.500h9V16M13.500 0v3M13.500 8v8" />
						<rect x="12.500" y="4" width="2" height="2" fill="#fff" />
					</svg>
				</Task>
				<Task $w={8} />
				<Task $w={40} $open>
					<svg width="22" height="19" viewBox="0 0 22 19">
						<path d="M0 1h8l2 2h12v15H0z" fill="#f3c44f" />
						<path d="M1 5h20v12H1z" fill="#fde596" />
						<path d="M3 18v-8h16v8h-4v-4H7v4z" fill="#3fa4e0" />
					</svg>
				</Task>
				<Task $w={54} style={{ paddingLeft: 4 }}>
					<svg width="22" height="22" viewBox="0 0 22 22">
						<circle cx="11" cy="11" r="11" fill="#f7ca35" />
						<path d="M1.500 5.500A11 11 0 0 0 11 22l5-8.500-5-2.500-4.500 2z" fill="#2a9c50" />
						<path d="M11 6h9.800A11 11 0 0 0 1.500 5.500L6 13z" fill="#dd4437" />
						<circle cx="11" cy="11" r="5" fill="#fff" />
						<circle cx="11" cy="11" r="3.900" fill="#4586f0" />
					</svg>
				</Task>
				<Task $w={48} $active>
					<svg width="22" height="16" viewBox="0 0 22 16">
						<path d="M8.500 1L2 8l6.500 7" fill="none" stroke="#e07a3c" strokeWidth="3" />
						<path d="M13.500 1L20 8l-6.500 7" fill="none" stroke="#2c8cc4" strokeWidth="3" />
					</svg>
				</Task>
				<Tray>
					<svg width="12" height="8" viewBox="0 0 12 8">
						<path d="M1 6.500l5-5 5 5" fill="none" stroke="#fff" strokeWidth="1.300" />
					</svg>
					<svg width="16" height="14" viewBox="0 0 16 14" style={{ marginLeft: 10 }}>
						<path
							d="M4 0l4 2.500L4 5 0 2.500zM12 0l4 2.500L12 5 8 2.500zM4 5l4 2.500L4 10 0 7.500zM12 5l4 2.500-4 2.500-4-2.500zM8 8.700l4 2.500L8 14l-4-2.800z"
							fill="#fff"
						/>
					</svg>
					<svg width="15" height="14" viewBox="0 0 15 14" style={{ marginLeft: 8 }}>
						<circle cx="9" cy="5.500" r="5" fill="#3c7fd0" />
						<path d="M7 1c3-1 5 0 4 2S8 5 7 4z" fill="#9fe0d0" />
						<path d="M0 7l4-4 1 5 6 3-3 3C4 14 1 11 0 7z" fill="#f0d030" />
						<path d="M1 6l3-3 1 5 6 3-2 1C5 12 2 9 1 6z" fill="#2f9c3c" />
					</svg>
					<svg width="15" height="14" viewBox="0 0 15 14" style={{ marginLeft: 9 }}>
						<g fill="none" stroke="#fff" strokeWidth="1.200">
							<path d="M1 13A12 12 0 0 1 13 1" opacity="0.600" />
							<path d="M4 13a9 9 0 0 1 9-9M7 13a6 6 0 0 1 6-6M10 13a3 3 0 0 1 3-3" />
						</g>
					</svg>
					<svg width="18" height="14" viewBox="0 0 18 14" style={{ marginLeft: 6 }}>
						<g fill="none" stroke="#fff" strokeWidth="1.100">
							<path d="M1 5h2.500L7 1.500v11L3.500 9H1z" />
							<path d="M9 5q1.500 2 0 4M11 3.500q3 3.500 0 7" />
							<path d="M13.500 2q4 5 0 10" opacity="0.500" />
						</g>
					</svg>
					<span className="lang">فا</span>
					<div className="clock">
						3:09 PM
						<br />
						9/24/2019
					</div>
					<div className="notice">
						<svg width="24" height="22" viewBox="0 0 24 22">
							<path d="M0 1h16v12h-9l-4 4v-4H0z" fill="#fff" />
							<path d="M3 4.500h10M3 7h10M3 9.500h7" stroke="#123" />
							<circle cx="15.500" cy="14.500" r="6.500" fill="#2c3a44" stroke="#93a0a8" />
							<text x="12.500" y="18.500" fontSize="11" fill="#fff">
								4
							</text>
						</svg>
					</div>
				</Tray>
			</TaskBar>

			<Tooltip>Draw Fibonacci retracement</Tooltip>
			<Pointer width="64" height="64" viewBox="0 0 64 64">
				<circle cx="32" cy="32" r="28.500" fill="none" stroke="#45dd45" strokeWidth="5" opacity="0.700" />
				<path
					d="M33 33v15.500l3.500-3.200 2.500 5.700 2.600-1.200-2.500-5.500h4.700z"
					fill="#fff"
					stroke="#000"
				/>
			</Pointer>
		</Window>
	);
}
